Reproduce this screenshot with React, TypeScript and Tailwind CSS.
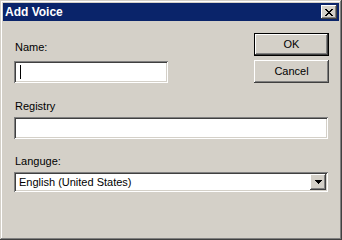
const raised =
  'shadow-[inset_-1px_-1px_0_#404040,inset_1px_1px_0_#ffffff,inset_-2px_-2px_0_#808080,inset_2px_2px_0_#d4d0c8]';
const sunken =
  'shadow-[inset_1px_1px_0_#808080,inset_-1px_-1px_0_#ffffff,inset_2px_2px_0_#404040,inset_-2px_-2px_0_#d4d0c8]';

const CloseGlyph = () => (
  <svg width="8" height="7" viewBox="0 0 8 7" shapeRendering="crispEdges">
    <path
      fill="#000"
      d="M0 0h2v1H0zM6 0h2v1H6zM1 1h2v1H1zM5 1h2v1H5zM2 2h4v1H2zM3 3h2v1H3zM2 4h4v1H2zM1 5h2v1H1zM5 5h2v1H5zM0 6h2v1H0zM6 6h2v1H6z"
    />
  </svg>
);

const ArrowGlyph = () => (
  <svg width="7" height="4" viewBox="0 0 7 4" shapeRendering="crispEdges">
    <path fill="#000" d="M0 0h7v1H0zM1 1h5v1H1zM2 2h3v1H2zM3 3h1v1H3z" />
  </svg>
);

const Button = ({ label, isDefault }: { label: string; isDefault?: boolean }) => (
  <div className={isDefault ? 'border border-black' : ''}>
    <div
      className={`${raised} bg-[#d4d0c8] flex items-center justify-center text-black ${
        isDefault ? 'h-[21px]' : 'h-[23px]'
      }`}
    >
      {label}
    </div>
  </div>
);

export default function App() {
  return (
    <div
      className="w-[342px] h-[240px] bg-[#d4d0c8] p-[3px] flex flex-col text-[11px] leading-[13px] text-black shadow-[inset_-1px_-1px_0_#404040,inset_1px_1px_0_#d4d0c8,inset_-2px_-2px_0_#808080,inset_2px_2px_0_#ffffff]"
      style={{ fontFamily: '"Liberation Sans", Arial, sans-serif' }}
    >
      {/* Title bar */}
      <div className="h-[18px] bg-[#0a246a] flex items-center justify-between pl-[2px] pr-[2px]">
        <span className="text-white font-bold text-[12px] leading-[14px]">Add Voice</span>
        <div className={`${raised} bg-[#d4d0c8] w-[16px] h-[14px] flex items-center justify-center pt-px`}>
          <CloseGlyph />
        </div>
      </div>

      {/* Body */}
      <div className="flex-1 flex flex-col pl-[11px] pr-[11px]">
        <div className="flex justify-between">
          <div className="w-[154px] flex flex-col pt-[20px]">
            <span className="pl-px">Name:</span>
            <div className={`${sunken} bg-white h-[22px] mt-[7px] flex items-center pl-[6px]`}>
              <div className="w-px h-[14px] bg-black" />
            </div>
          </div>
          <div className="w-[75px] flex flex-col pt-[12px] gap-[4px] mr-[-1px]">
            <Button label="OK" isDefault />
            <Button label="Cancel" />
          </div>
        </div>

        <span className="mt-[17px] pl-px">Registry</span>
        <div className={`${sunken} bg-white h-[22px] mt-[4px]`} />

        <span className="mt-[16px] pl-px">Languge:</span>
        <div className={`${sunken} bg-white h-[20px] mt-[4px] flex items-center justify-between pl-[5px] pr-[2px]`}>
          <span>English (United States)</span>
          <div className={`${raised} bg-[#d4d0c8] w-[16px] h-[16px] flex items-center justify-center`}>
            <ArrowGlyph />
          </div>
        </div>
      </div>
    </div>
  );
}
